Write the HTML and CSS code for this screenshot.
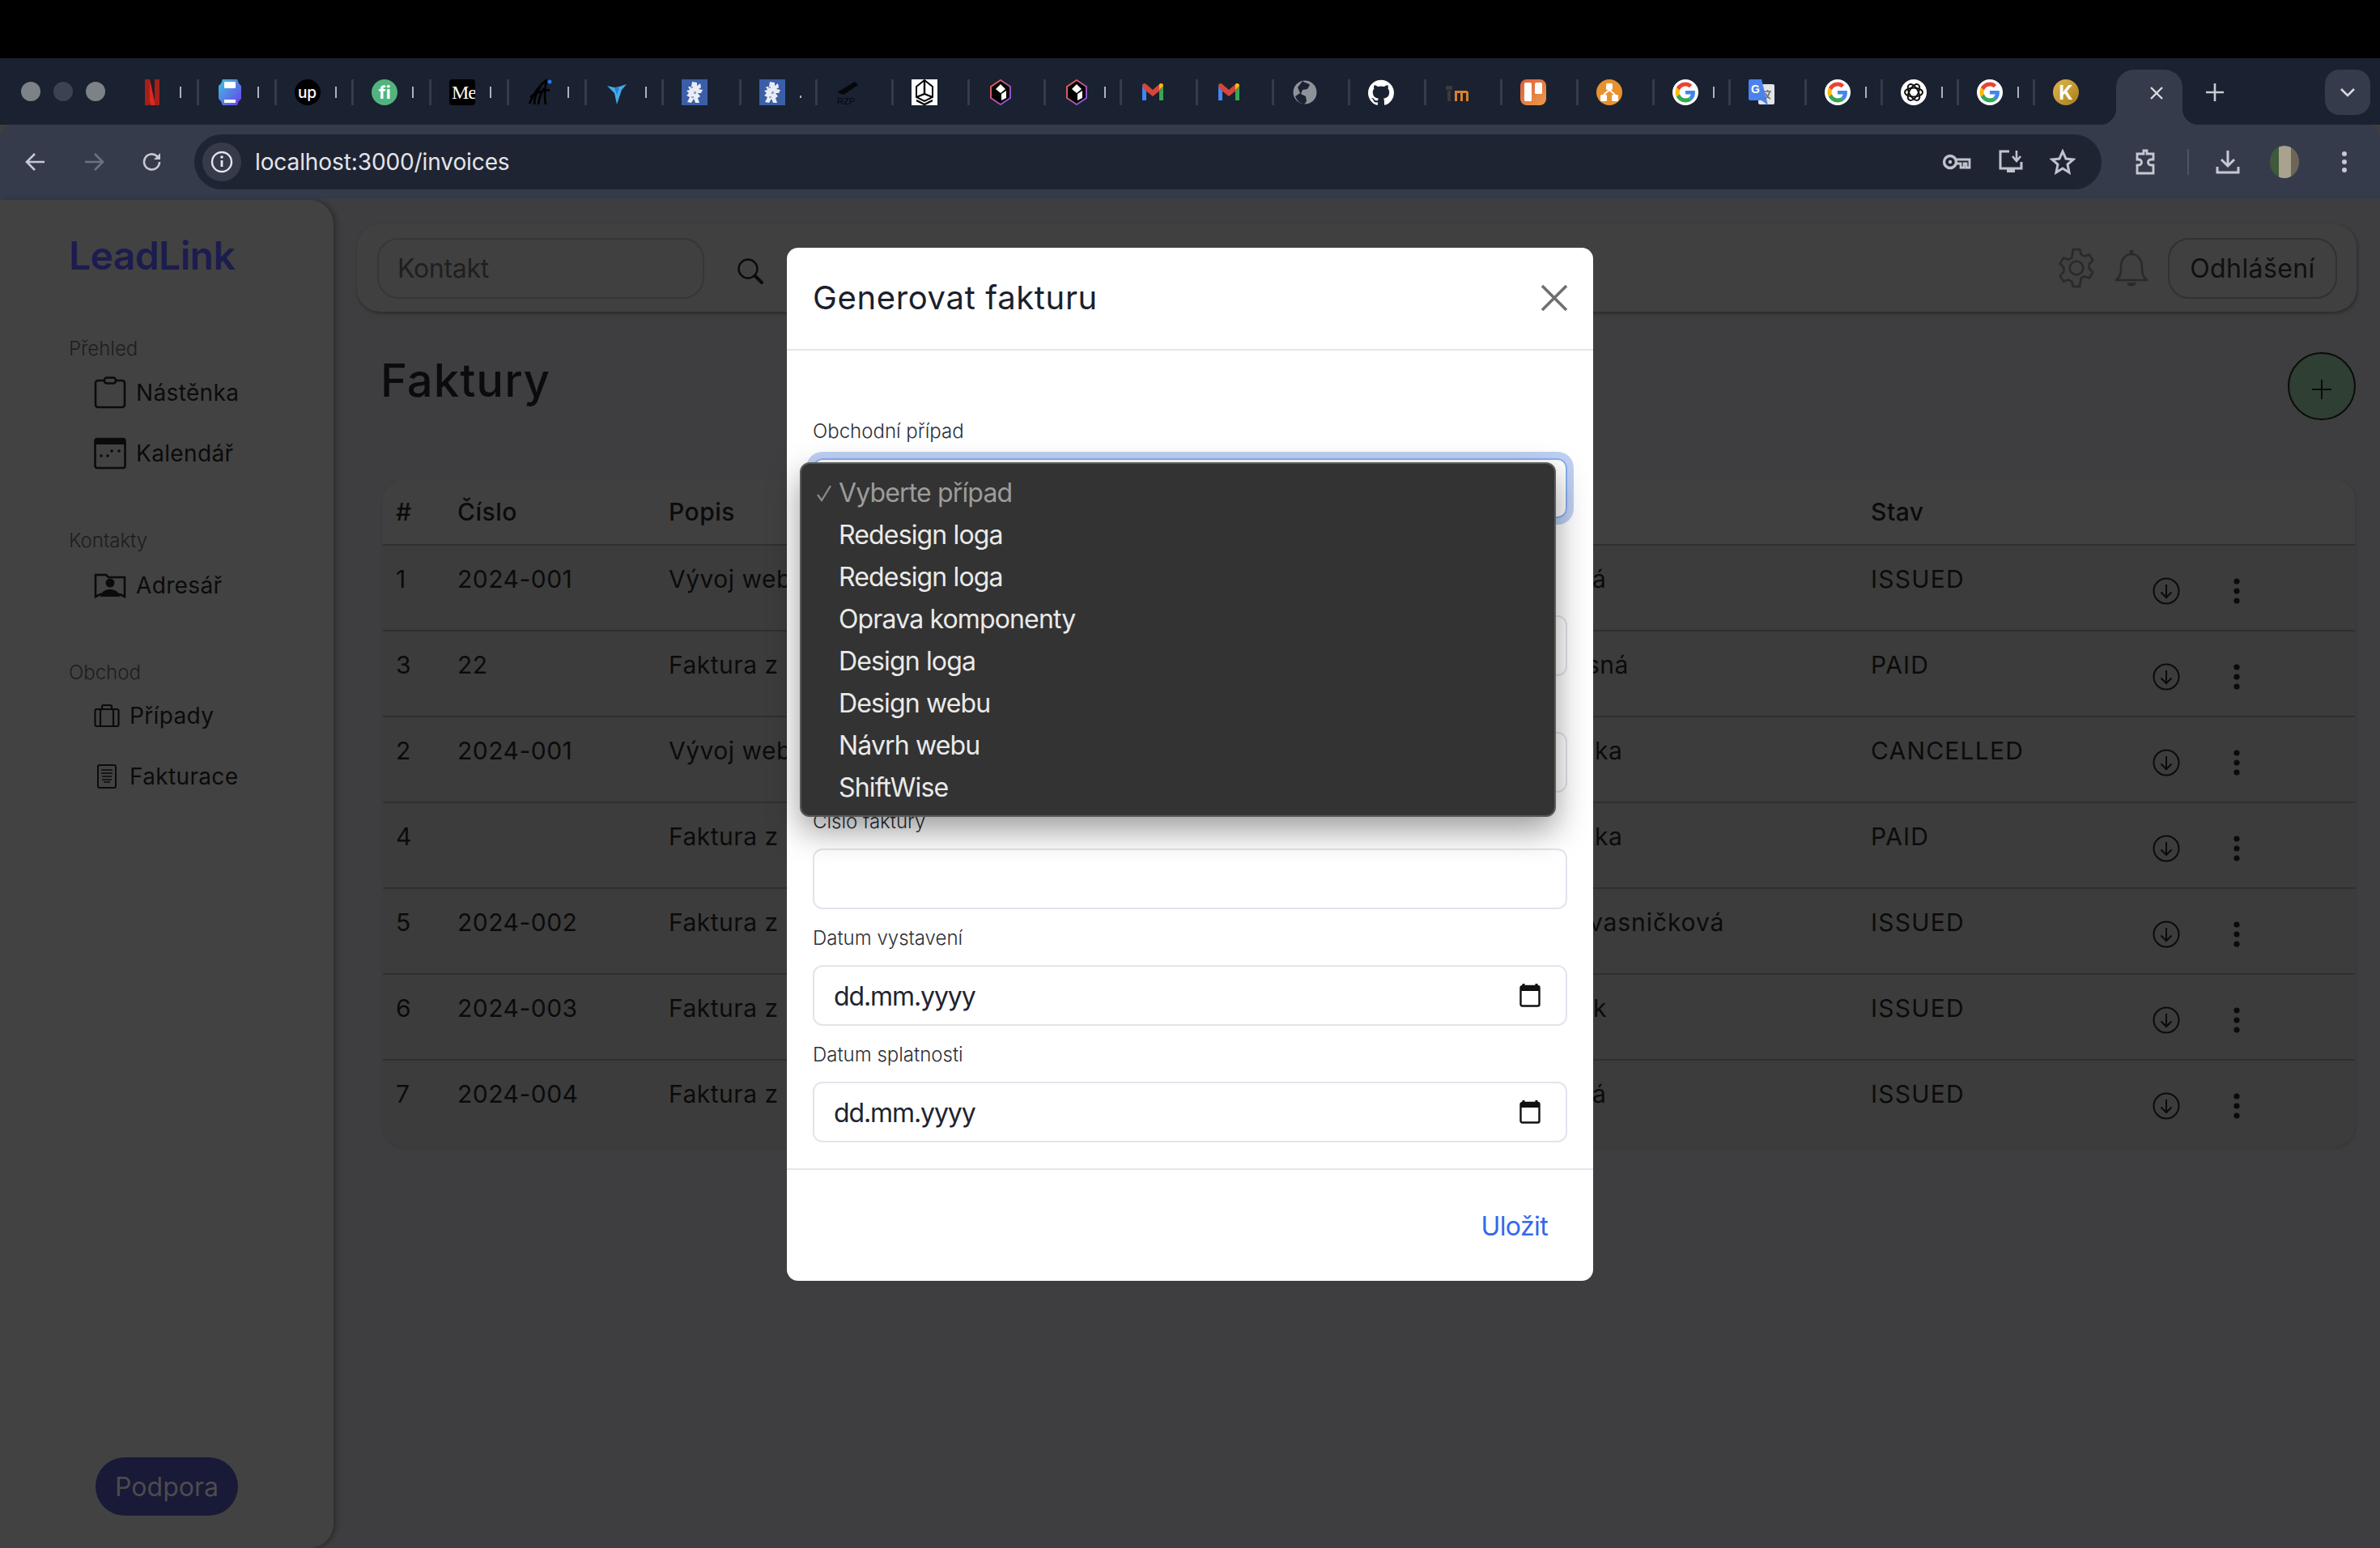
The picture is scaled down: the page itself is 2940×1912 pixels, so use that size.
FILE: index.html
```html
<!DOCTYPE html>
<html lang="cs">
<head>
<meta charset="utf-8">
<title>LeadLink – Faktury</title>
<link rel="stylesheet" href="styles.css">
</head>
<body>
<svg class="defs" width="0" height="0" aria-hidden="true">
  <defs>
    <linearGradient id="watchg" x1="0" y1="0" x2="1" y2="1"><stop offset="0" stop-color="#3fc4d8"/><stop offset="1" stop-color="#6a3df0"/></linearGradient>
    <linearGradient id="trelg" x1="0" y1="0" x2="1" y2="1"><stop offset="0" stop-color="#dd5f3c"/><stop offset="1" stop-color="#ee9a4c"/></linearGradient>
    <linearGradient id="hexg" x1="0" y1="0" x2="1" y2="1"><stop offset="0" stop-color="#f0603f"/><stop offset="1" stop-color="#7b4df0"/></linearGradient>
    <symbol id="lion" viewBox="0 0 32 32"><rect width="32" height="32" fill="#3b5ea8"/><path d="M13 3l6 1 0 4 4-3 1 5-3 2 5 1-2 4-4 0 3 4-3 2 2 6h-5l-2-5-3 5-5-1 3-6-4-2 3-3-3-3 4-1-2-4 4 0z" fill="#e8ecf5"/><path d="M11 9h3v2h-3zM15 15h3v3h-3zM12 21h3v2h-3z" fill="#8fa6d3"/></symbol>
    <symbol id="hex" viewBox="0 0 32 32"><path d="M16 1l12 8v14l-12 8-12-8V9z" fill="#000" stroke="url(#hexg)" stroke-width="2"/><path d="M16 6l6 6-6 5-6-5z" fill="#fff"/><path d="M17 18l6-4v9l-6 3z" fill="#fff"/></symbol>
    <symbol id="gmail" viewBox="0 0 32 32"><path d="M3 8v18h5V13z" fill="#4285f4"/><path d="M29 8v18h-5V13z" fill="#34a853"/><path d="M3 8c0-3 3-4 5-2l8 7 8-7c2-2 5-1 5 2l-3 5-10 8-10-8z" fill="#d44638"/><path d="M24 6c2-2 5-1 5 2l-5 5z" fill="#fbbc05"/></symbol>
    <symbol id="google" viewBox="0 0 32 32"><circle cx="16" cy="16" r="16" fill="#fff"/><g transform="translate(3.5 3.5) scale(.52)"><path fill="#EA4335" d="M24 9.5c3.54 0 6.71 1.22 9.21 3.6l6.85-6.85C35.9 2.38 30.47 0 24 0 14.62 0 6.51 5.38 2.56 13.22l7.98 6.19C12.43 13.72 17.74 9.5 24 9.5z"/><path fill="#4285F4" d="M46.98 24.55c0-1.57-.15-3.09-.38-4.55H24v9.02h12.94c-.58 2.96-2.26 5.48-4.78 7.18l7.73 6c4.51-4.18 7.09-10.36 7.09-17.65z"/><path fill="#FBBC05" d="M10.53 28.59c-.48-1.45-.76-2.99-.76-4.59s.27-3.14.76-4.59l-7.98-6.19C.92 16.46 0 20.12 0 24c0 3.88.92 7.54 2.56 10.78l7.97-6.19z"/><path fill="#34A853" d="M24 48c6.48 0 11.93-2.13 15.89-5.81l-7.73-6c-2.15 1.45-4.92 2.3-8.16 2.3-6.26 0-11.57-4.22-13.47-9.91l-7.98 6.19C6.51 42.62 14.62 48 24 48z"/></g></symbol>
    <symbol id="dl" viewBox="0 0 34 34"><circle cx="17" cy="17" r="15.5" fill="none" stroke="#0b0b0b" stroke-width="2"/><path d="M17 9v16M10.5 18.5L17 25l6.5-6.5" fill="none" stroke="#0b0b0b" stroke-width="2"/></symbol>
    <symbol id="more" viewBox="0 0 10 34"><circle cx="5" cy="5" r="3.600" fill="#0b0b0b"/><circle cx="5" cy="17" r="3.600" fill="#0b0b0b"/><circle cx="5" cy="29" r="3.600" fill="#0b0b0b"/></symbol>
    <symbol id="cal" viewBox="0 0 26 30"><path d="M5 1v4M21 1v4" stroke="#111" stroke-width="3"/><rect x="1.500" y="4" width="23" height="24.500" rx="2" fill="none" stroke="#111" stroke-width="2.400"/><rect x="1.500" y="4" width="23" height="6" fill="#111"/></symbol>
  </defs>
</svg>

<div class="titlebar"></div>

<div class="tabstrip">
  <div class="lights"><i class="light"></i><i class="light dim"></i><i class="light"></i></div>
  <div class="tab w96"><svg class="fav" viewBox="0 0 32 32"><path d="M7 0h6l7 32h-6z" fill="#e0291f"/><path d="M7 0h6v32l-6 0z" fill="#a81f18"/><path d="M19 0h6v32h-6z" fill="#a81f18"/></svg><i class="sliver"></i></div>
  <div class="tab w96"><svg class="fav" viewBox="0 0 32 32"><path d="M7 0h18l2 5 3 3v16l-3 3-2 5H7l-2-5-3-3V8l3-3z" fill="url(#watchg)"/><rect x="9" y="3" width="14" height="8" rx="1" fill="#fff"/><rect x="9" y="25" width="14" height="4" fill="#fff"/></svg><i class="sliver"></i></div>
  <div class="tab w96"><span class="fav badge upb">up</span><i class="sliver"></i></div>
  <div class="tab w96"><span class="fav badge fib">fi</span><i class="sliver"></i></div>
  <div class="tab w96"><span class="fav badge meb">Me</span><i class="sliver"></i></div>
  <div class="tab w96"><svg class="fav" viewBox="0 0 32 32"><path d="M3 30C8 18 14 8 24 1c-2 10-3 20-1 30M4 22c6-5 14-8 24-9M9 31c0-8 3-16 8-22M14 31c1-8 3-14 7-20" fill="none" stroke="#000" stroke-width="2.600"/><circle cx="28" cy="3" r="2.500" fill="#2277ee"/></svg><i class="sliver"></i></div>
  <div class="tab w96"><svg class="fav" viewBox="0 0 32 32"><path d="M3 8l9 2 6-1 9-3-6 7-3 9-3 9-3-14z" fill="#45a9ec"/><path d="M12 10l6 0-3 9z" fill="#2b7fc4"/></svg><i class="sliver"></i></div>
  <div class="tab w96"><svg class="fav"><use href="#lion"/></svg></div>
  <div class="tab"><svg class="fav"><use href="#lion"/></svg><i class="sliver tiny"></i></div>
  <div class="tab"><svg class="fav" viewBox="0 0 32 32"><path d="M2 16L24 3l4 4-18 12z" fill="#05070c"/><text x="2" y="31" class="rzp">RZP</text></svg></div>
  <div class="tab"><svg class="fav" viewBox="0 0 32 32"><rect width="32" height="32" fill="#fff"/><path d="M16 1l10 8v13l-10 5-10-5V9z" fill="#fff" stroke="#000" stroke-width="2"/><path d="M16 1v17M6 22l10-4 10 4M6 26l10 5 10-5" fill="none" stroke="#000" stroke-width="2.400"/></svg></div>
  <div class="tab"><svg class="fav"><use href="#hex"/></svg></div>
  <div class="tab"><svg class="fav"><use href="#hex"/></svg><i class="sliver"></i></div>
  <div class="tab"><svg class="fav"><use href="#gmail"/></svg></div>
  <div class="tab"><svg class="fav"><use href="#gmail"/></svg></div>
  <div class="tab"><svg class="fav" viewBox="0 0 32 32"><circle cx="16" cy="16" r="14.500" fill="#8e9299"/><path d="M13 2c3 3 7 2 9 5l-3 5-6 1-2 5 6 3 1 6-3 4c-4-1-9-4-11-10l6-4-3-7z" fill="#1b2232"/></svg></div>
  <div class="tab"><svg class="fav" viewBox="0 0 24 24"><path fill="#fff" d="M12 .5C5.37.5 0 5.87 0 12.5c0 5.3 3.44 9.8 8.2 11.38.6.11.82-.26.82-.58v-2.03c-3.34.73-4.04-1.61-4.04-1.61-.55-1.39-1.34-1.76-1.34-1.76-1.09-.74.08-.73.08-.73 1.2.09 1.84 1.24 1.84 1.24 1.07 1.83 2.81 1.3 3.5 1 .11-.78.42-1.31.76-1.61-2.67-.3-5.47-1.33-5.47-5.93 0-1.31.47-2.38 1.24-3.22-.14-.3-.54-1.52.1-3.18 0 0 1-.32 3.3 1.23a11.5 11.5 0 016 0c2.28-1.55 3.29-1.23 3.29-1.23.64 1.66.24 2.88.12 3.18.77.84 1.23 1.91 1.23 3.22 0 4.61-2.81 5.63-5.48 5.92.42.36.81 1.1.81 2.22v3.29c0 .32.22.69.83.58A12 12 0 0024 12.5C24 5.87 18.63.5 12 .5z"/></svg></div>
  <div class="tab"><svg class="fav" viewBox="0 0 32 32"><path d="M2 8h8v5H2zM4 14h4v13H4z" fill="#3d3a38"/><path d="M11 14h16c2 0 3 1 3 3v10h-3V17h-4v10h-3V17h-4v10h-3V14z" fill="#d9802c"/></svg></div>
  <div class="tab"><svg class="fav" viewBox="0 0 32 32"><rect width="32" height="32" rx="8" fill="url(#trelg)"/><rect x="5" y="4" width="9" height="23" rx="1.500" fill="#fff"/><rect x="18" y="4" width="9" height="14" rx="1.500" fill="#fff"/></svg></div>
  <div class="tab"><svg class="fav" viewBox="0 0 32 32"><circle cx="16" cy="16" r="16" fill="#e8922f"/><rect x="12" y="5" width="8" height="8" rx="1.500" fill="#fff"/><rect x="5" y="19" width="8" height="8" rx="1.500" fill="#fff"/><rect x="19" y="19" width="8" height="8" rx="1.500" fill="#fff"/><path d="M16 13l-7 6M16 13l7 6" stroke="#fff" stroke-width="2"/></svg></div>
  <div class="tab"><svg class="fav"><use href="#google"/></svg><i class="sliver"></i></div>
  <div class="tab"><svg class="fav" viewBox="0 0 32 32"><rect x="12" y="6" width="20" height="25" rx="2" fill="#e3e4e7"/><path d="M0 2a2 2 0 012-2h14l8 32-8-6H2a2 2 0 01-2-2z" fill="#4a82ee"/><text x="3" y="17" class="gt">G</text><path d="M19 15h9M23.500 13v2M26 15c-1 5-4 8-6 9M21 17c1 3 4 6 6 7" fill="none" stroke="#6d7178" stroke-width="1.700"/></svg></div>
  <div class="tab"><svg class="fav"><use href="#google"/></svg><i class="sliver"></i></div>
  <div class="tab"><svg class="fav" viewBox="0 0 32 32"><circle cx="16" cy="16" r="16" fill="#fff"/><g fill="none" stroke="#111" stroke-width="1.900"><ellipse cx="16" cy="16" rx="11" ry="5.500"/><ellipse cx="16" cy="16" rx="11" ry="5.500" transform="rotate(60 16 16)"/><ellipse cx="16" cy="16" rx="11" ry="5.500" transform="rotate(120 16 16)"/></g></svg><i class="sliver"></i></div>
  <div class="tab"><svg class="fav"><use href="#google"/></svg><i class="sliver"></i></div>
  <div class="tab plain"><span class="fav badge kb">K</span></div>
  <div class="tab-active"><svg class="x" viewBox="0 0 20 20"><path d="M3 3l14 14M17 3L3 17" stroke="#d9dbe2" stroke-width="2.400"/></svg></div>
  <svg class="newtab" viewBox="0 0 22 22"><path d="M11 0v22M0 11h22" stroke="#c8cbd4" stroke-width="2.600"/></svg>
  <div class="tabsearch"><svg viewBox="0 0 20 12" width="20" height="12"><path d="M2 2l8 8 8-8" fill="none" stroke="#d6d9e0" stroke-width="2.600"/></svg></div>
</div>

<div class="toolbar">
  <svg class="tool" viewBox="0 0 28 28"><path d="M25 14H4M13 4L3 14l10 10" fill="none" stroke="#c6c9d2" stroke-width="2.600"/></svg>
  <svg class="tool" viewBox="0 0 28 28"><path d="M3 14h21M15 4l10 10-10 10" fill="none" stroke="#6d7280" stroke-width="2.600"/></svg>
  <svg class="tool" viewBox="0 0 28 28"><path d="M23 14a9.500 9.500 0 11-3-7l3 3" fill="none" stroke="#c6c9d2" stroke-width="2.600"/><path d="M24 3v8h-8z" fill="#c6c9d2"/></svg>
  <div class="omnibox">
    <span class="chip"><svg viewBox="0 0 28 28" width="28" height="28"><circle cx="14" cy="14" r="12" fill="none" stroke="#e3e5ea" stroke-width="2.400"/><path d="M14 12v8" stroke="#e3e5ea" stroke-width="2.800"/><circle cx="14" cy="8" r="1.800" fill="#e3e5ea"/></svg></span>
    <span class="url">localhost:3000/invoices</span>
    <span class="omni-icons">
      <svg viewBox="0 0 36 24" width="36" height="24"><circle cx="10" cy="12" r="7.500" fill="none" stroke="#c0c3cc" stroke-width="3.400"/><circle cx="10" cy="12" r="2.200" fill="#c0c3cc"/><path d="M17 9h17v10h-4v-5h-3v5h-4v-5h-6" fill="none" stroke="#c0c3cc" stroke-width="2.800"/></svg>
      <svg viewBox="0 0 32 32" width="32" height="32"><path d="M14 3H3v21h26V16" fill="none" stroke="#c0c3cc" stroke-width="3"/><path d="M11 24h10v5H11z" fill="#c0c3cc"/><path d="M23 2v12M18 9l5 6 5-6" fill="none" stroke="#c0c3cc" stroke-width="2.600"/></svg>
      <svg viewBox="0 0 32 32" width="32" height="32"><path d="M16 3l4 9 9 1-7 6 2 10-8-5-8 5 2-10-7-6 9-1z" fill="none" stroke="#c0c3cc" stroke-width="3"/></svg>
    </span>
  </div>
  <svg class="tool ext" viewBox="0 0 32 32"><path d="M12 6h2V2h4v4h8v7h-3a3 3 0 000 7h3v10H6V20h2a3 3 0 000-7H6V6z" fill="none" stroke="#c6c9d2" stroke-width="2.800"/></svg>
  <i class="tool-sep"></i>
  <svg class="tool dlb" viewBox="0 0 32 32"><path d="M16 2v18M8 13l8 8 8-8" fill="none" stroke="#c6c9d2" stroke-width="3"/><path d="M3 22v7h26v-7" fill="none" stroke="#c6c9d2" stroke-width="3"/></svg>
  <i class="avatar"></i>
  <svg class="tool menu" viewBox="0 0 8 28"><circle cx="4" cy="4" r="3" fill="#c6c9d2"/><circle cx="4" cy="14" r="3" fill="#c6c9d2"/><circle cx="4" cy="24" r="3" fill="#c6c9d2"/></svg>
</div>

<div class="app">
  <aside class="sidebar">
    <div class="logo">LeadLink</div>
    <div class="nav-label">Přehled</div>
    <div class="nav-item"><svg class="ni w40" viewBox="0 0 40 40"><path d="M12 5H5a3 3 0 00-3 3v27a3 3 0 003 3h30a3 3 0 003-3V8a3 3 0 00-3-3h-7" fill="none" stroke="#0b0b0b" stroke-width="2.600"/><rect x="13" y="1.500" width="14" height="7" rx="3" fill="none" stroke="#0b0b0b" stroke-width="2.600"/></svg><span>Nástěnka</span></div>
    <div class="nav-item"><svg class="ni w40" viewBox="0 0 40 40"><rect x="1.500" y="2" width="37" height="36" rx="2.500" fill="none" stroke="#0b0b0b" stroke-width="2.600"/><rect x="1.500" y="2" width="37" height="7" fill="#0b0b0b"/><g fill="#0b0b0b"><circle cx="9" cy="23" r="1.800"/><circle cx="17" cy="23" r="1.800"/><circle cx="22" cy="17" r="1.800"/><circle cx="31" cy="17" r="1.800"/></g></svg><span>Kalendář</span></div>
    <div class="nav-label sec">Kontakty</div>
    <div class="nav-item"><svg class="ni w40 ad" viewBox="0 0 40 32"><path d="M2 30V3h13l3 3h20v24l-6-3H8z" fill="none" stroke="#0b0b0b" stroke-width="2.600"/><circle cx="20" cy="13" r="5.500" fill="#0b0b0b"/><path d="M8 30c1-7 7-9 12-9s11 2 12 9z" fill="#0b0b0b"/></svg><span>Adresář</span></div>
    <div class="nav-label sec tight">Obchod</div>
    <div class="nav-item"><svg class="ni w32" viewBox="0 0 32 28"><rect x="1.500" y="6" width="29" height="21" rx="2" fill="none" stroke="#0b0b0b" stroke-width="2.200"/><path d="M8 27V6M24 27V6M10 6V3a2 2 0 012-2h8a2 2 0 012 2v3" fill="none" stroke="#0b0b0b" stroke-width="2.200"/></svg><span>Případy</span></div>
    <div class="nav-item"><svg class="ni w24" viewBox="0 0 24 30"><rect x="1" y="1" width="22" height="28" rx="2" fill="none" stroke="#0b0b0b" stroke-width="2"/><path d="M5 7h14M5 11h14M6 15h12M6 19h12M8 22h8" stroke="#0b0b0b" stroke-width="1.500"/></svg><span>Fakturace</span></div>
    <div class="support">Podpora</div>
  </aside>

  <main class="main">
    <header class="topbar">
      <div class="search">Kontakt</div>
      <svg class="search-ic" viewBox="0 0 34 34"><circle cx="14" cy="14" r="11.500" fill="none" stroke="#0b0b0b" stroke-width="2.400"/><path d="M22.500 22.500L31 31" stroke="#0b0b0b" stroke-width="4" stroke-linecap="round"/></svg>
      <div class="top-right">
        <svg class="gear" viewBox="0 0 50 50"><circle cx="25" cy="25" r="8" fill="none" stroke="#2a2a2a" stroke-width="2.600"/><path d="M21 3h8l1.500 6 4 2 6-2 4 7-4.500 4.500v5l4.500 4.500-4 7-6-2-4 2L29 47h-8l-1.500-6-4-2-6 2-4-7L10 29.500v-5L5.500 20l4-7 6 2 4-2z" fill="none" stroke="#2a2a2a" stroke-width="2.600" stroke-linejoin="round"/></svg>
        <svg class="bell" viewBox="0 0 42 50"><path d="M2 40c5-4 6-8 6-16 0-9 5-16 13-16s13 7 13 16c0 8 1 12 6 16z" fill="none" stroke="#2a2a2a" stroke-width="2.600" stroke-linejoin="round"/><circle cx="21" cy="5" r="2.500" fill="#2a2a2a"/><path d="M15 43h12c-1 6-11 6-12 0z" fill="#2a2a2a"/></svg>
        <div class="logout">Odhlášení</div>
      </div>
    </header>

    <div class="page-head">
      <h1 class="title">Faktury</h1>
      <div class="fab"><svg viewBox="0 0 24 24" width="24" height="24"><path d="M12 0v24M0 12h24" stroke="#0b0b0b" stroke-width="2"/></svg></div>
    </div>

    <table class="tbl">
      <colgroup><col class="c1"><col class="c2"><col class="c3"><col class="c4"><col class="c5"><col></colgroup>
      <thead><tr><th>#</th><th>Číslo</th><th>Popis</th><th></th><th>Stav</th><th></th></tr></thead>
      <tbody>
        <tr><td>1</td><td>2024-001</td><td>Vývoj webu</td><td class="cl p-a">á</td><td class="st">ISSUED</td><td class="act"><svg class="dl"><use href="#dl"/></svg><svg class="more"><use href="#more"/></svg></td></tr>
        <tr><td>3</td><td>22</td><td>Faktura z</td><td class="cl p-sna">sná</td><td class="st">PAID</td><td class="act"><svg class="dl"><use href="#dl"/></svg><svg class="more"><use href="#more"/></svg></td></tr>
        <tr><td>2</td><td>2024-001</td><td>Vývoj webu</td><td class="cl p-ka">ka</td><td class="st">CANCELLED</td><td class="act"><svg class="dl"><use href="#dl"/></svg><svg class="more"><use href="#more"/></svg></td></tr>
        <tr><td>4</td><td></td><td>Faktura z</td><td class="cl p-ka">ka</td><td class="st">PAID</td><td class="act"><svg class="dl"><use href="#dl"/></svg><svg class="more"><use href="#more"/></svg></td></tr>
        <tr><td>5</td><td>2024-002</td><td>Faktura z</td><td class="cl p-kv">vasničková</td><td class="st">ISSUED</td><td class="act"><svg class="dl"><use href="#dl"/></svg><svg class="more"><use href="#more"/></svg></td></tr>
        <tr><td>6</td><td>2024-003</td><td>Faktura z</td><td class="cl p-k">k</td><td class="st">ISSUED</td><td class="act"><svg class="dl"><use href="#dl"/></svg><svg class="more"><use href="#more"/></svg></td></tr>
        <tr><td>7</td><td>2024-004</td><td>Faktura z</td><td class="cl p-a">á</td><td class="st">ISSUED</td><td class="act"><svg class="dl"><use href="#dl"/></svg><svg class="more"><use href="#more"/></svg></td></tr>
      </tbody>
    </table>
  </main>
</div>

<section class="modal">
  <div class="modal-head">
    <h2 class="modal-title">Generovat fakturu</h2>
    <svg class="modal-x" viewBox="0 0 34 34"><path d="M2 2l30 30M32 2L2 32" stroke="#6f6f6f" stroke-width="3.600"/></svg>
  </div>
  <div class="modal-body">
    <div class="field"><div class="lbl">Obchodní případ</div><div class="ctl focus"></div></div>
    <div class="field after-select"><div class="lbl"></div><div class="ctl"></div></div>
    <div class="field"><div class="lbl"></div><div class="ctl"></div></div>
    <div class="field"><div class="lbl">Číslo faktury</div><div class="ctl"></div></div>
    <div class="field"><div class="lbl">Datum vystavení</div><div class="ctl date"><span class="dateval">dd.mm.yyyy</span><svg class="cal"><use href="#cal"/></svg></div></div>
    <div class="field"><div class="lbl">Datum splatnosti</div><div class="ctl date"><span class="dateval">dd.mm.yyyy</span><svg class="cal"><use href="#cal"/></svg></div></div>
  </div>
  <div class="modal-foot"><span class="save">Uložit</span></div>

  <div class="dropdown">
    <div class="opt sel"><svg class="check" viewBox="0 0 20 24"><path d="M2 14l5 7L18 3" fill="none" stroke="#8b8b8b" stroke-width="2.200"/></svg>Vyberte případ</div>
    <div class="opt">Redesign loga</div>
    <div class="opt">Redesign loga</div>
    <div class="opt">Oprava komponenty</div>
    <div class="opt">Design loga</div>
    <div class="opt">Design webu</div>
    <div class="opt">Návrh webu</div>
    <div class="opt">ShiftWise</div>
  </div>
</section>
</body>
</html>
```

FILE: styles.css
```css
* { box-sizing: border-box; }
html, body { margin: 0; padding: 0; }
body {
  width: 2940px; height: 1912px; overflow: hidden; position: relative;
  background: #3e3e40; font-family: Inter, "Noto Sans", sans-serif; color: #0b0b0b;
  display: flex; flex-direction: column;
}
.defs { position: absolute; }
.titlebar { height: 72px; background: #000; flex: none; }

/* tab strip */
.tabstrip { height: 82px; background: #1a2131; flex: none; display: flex; align-items: flex-start; }
.lights { width: 150px; flex: none; display: flex; gap: 16px; padding: 29px 0 0 26px; }
.light { width: 24px; height: 24px; border-radius: 50%; background: #7d8188; }
.light.dim { background: #3c4250; }
.tab {
  width: 94px; height: 32px; margin-top: 26px; flex: none; padding-left: 22px;
  display: flex; align-items: center; border-right: 3px solid #353b4b;
}
.tab.w96 { width: 95.75px; }
.tab.plain { width: 100px; border-right: 0; }
.fav { width: 32px; height: 32px; flex: none; display: block; }
.sliver { width: 2px; height: 14px; margin-left: 18px; background: #aeb1ba; flex: none; }
.sliver.tiny { height: 3px; margin-top: 10px; }
.badge { display: flex; align-items: center; justify-content: center; border-radius: 50%; font-weight: 700; }
.upb { background: #000; color: #fff; font-size: 19px; font-weight: 500; }
.fib { background: #52b47c; color: #fff; font-size: 22px; }
.meb { background: #000; color: #fff; border-radius: 4px; font: 400 24px "Liberation Serif", serif; overflow: hidden; justify-content: flex-start; padding-left: 3px; letter-spacing: -1px; }
.kb { background: linear-gradient(135deg, #e2b84a, #a67c1f); color: #fff; font-size: 24px; }
.rzp { font: 400 11px "Liberation Sans", sans-serif; fill: #05070c; }
.gt { font: 700 14px "Liberation Sans", sans-serif; fill: #fff; }
.tab-active {
  width: 82px; height: 68px; margin-top: 14px; background: #353b4b; flex: none; position: relative;
  border-radius: 22px 22px 0 0; display: flex; align-items: flex-start; justify-content: center; padding-top: 18px;
}
.tab-active::before, .tab-active::after {
  content: ""; position: absolute; bottom: 0; width: 20px; height: 20px;
}
.tab-active::before { left: -20px; background: radial-gradient(circle at 0 0, transparent 20px, #353b4b 20.5px); }
.tab-active::after { right: -20px; background: radial-gradient(circle at 100% 0, transparent 20px, #353b4b 20.5px); }
.x { width: 20px; height: 20px; margin-left: 18px; margin-top: 1px; }
.newtab { width: 22px; height: 22px; margin: 31px 0 0 29px; flex: none; }
.tabsearch {
  width: 56px; height: 56px; margin: 14px 0 0 125px; background: #353b4b; border-radius: 18px; flex: none;
  display: flex; align-items: center; justify-content: center;
}

/* toolbar */
.toolbar {
  height: 93px; flex: none; background: #353b4b; display: flex; align-items: center; border-radius: 16px 16px 0 0;
  padding: 0 0 1px 30px; border-bottom: 1px solid #3f4046;
}
.tool { width: 28px; height: 28px; flex: none; margin-right: 44px; }
.toolbar .tool:nth-child(3) { margin-right: 38px; }
.omnibox {
  width: 2356px; height: 68px; flex: none; background: #1f2433; border-radius: 34px; display: flex; align-items: center;
  padding: 0 32px 0 10px;
}
.chip { width: 48px; height: 48px; border-radius: 50%; background: #353b4b; display: flex; align-items: center; justify-content: center; flex: none; }
.url { margin-left: 17px; font: 400 28px Inter, sans-serif; letter-spacing: -.1px; color: #e3e5ea; }
.omni-icons { margin-left: auto; display: flex; align-items: center; gap: 32px; }
.omni-icons svg:first-child { margin-right: 1px; }
.tool.ext { width: 32px; height: 32px; margin: 0 36px 0 38px; }
.tool-sep { width: 2px; height: 32px; background: #4d5363; flex: none; }
.tool.dlb { width: 32px; height: 32px; margin: 0 0 0 32px; }
.avatar { width: 36px; height: 40px; margin-left: 36px; border-radius: 50%; flex: none; background: linear-gradient(90deg, #3d5a3a 0 30%, #a8a28e 30% 72%, #6b6658 72%); }
.tool.menu { width: 8px; height: 28px; margin: 0 0 0 52px; }

/* app */
.app { flex: 1; display: flex; min-height: 0; }
.sidebar {
  width: 412px; flex: none; background: #424242; border-radius: 0 30px 30px 0; box-shadow: 3px 0 6px rgba(0,0,0,.3);
  padding: 39px 0 40px 85px; display: flex; flex-direction: column;
}
.logo { font-size: 48px; line-height: 60px; font-weight: 600; color: #1c1c4e; letter-spacing: -.6px; }
.nav-label { font-size: 24px; line-height: 36px; font-weight: 300; color: #1d1d1d; margin-top: 67px; margin-bottom: -1px; }
.nav-label.sec { margin-top: 52px; margin-bottom: 0; }
.nav-label.sec.tight { margin-bottom: -2px; }
.nav-item { height: 75px; padding: 0 0 2px 31px; display: flex; align-items: center; gap: 12px; font-size: 28px; letter-spacing: .35px; color: #0b0b0b; }
.ni { flex: none; display: block; }
.w40 { width: 40px; height: 40px; }
.w40.ad { height: 32px; }
.w32 { width: 32px; height: 28px; }
.w24 { width: 24px; height: 30px; margin: 0 4px; }
.support {
  margin-top: auto; margin-left: 33px; width: 176px; height: 72px; border-radius: 36px; background: #191938; color: #4c4c4c;
  font-size: 32px; display: flex; align-items: center; justify-content: center;
}

.main { flex: 1; min-width: 0; padding: 30px 29px 0; }
.topbar {
  height: 108px; border-radius: 28px; background: #404040; box-shadow: 1px 2px 4px rgba(0,0,0,.35);
  display: flex; align-items: center; padding: 0 24px 0 25px;
}
.search {
  width: 404px; height: 75px; border: 2px solid #363636; border-radius: 26px; padding-left: 23px; display: flex; align-items: center;
  font-size: 32px; letter-spacing: -.3px; color: #1f1f1f;
}
.search-ic { width: 34px; height: 34px; margin: 8px 0 0 40px; flex: none; }
.top-right { margin-left: auto; display: flex; align-items: center; }
.gear { width: 52px; height: 52px; }
.bell { width: 42px; height: 50px; margin-left: 21px; }
.logout {
  width: 209px; height: 75px; margin-left: 24px; border: 2px solid #313131; border-radius: 26px;
  display: flex; align-items: center; justify-content: center; font-size: 32px; letter-spacing: .4px; color: #0f0f0f;
}
.page-head { margin: 50px 1px 0 29px; height: 84px; display: flex; justify-content: space-between; align-items: center; }
.title { margin: 0 0 14px; font-size: 56px; line-height: 70px; font-weight: 500; letter-spacing: 1.1px; color: #0b0b0d; }
.fab {
  width: 84px; height: 84px; border-radius: 50%; background: #2f3f33; border: 2px solid #0b0b0b;
  display: flex; align-items: center; justify-content: center; padding-top: 8px;
}
.tbl {
  margin: 73px 0 0 32px; width: 2436px; table-layout: fixed; border-collapse: separate; border-spacing: 0;
  border-radius: 26px; background: #3c3c3c; box-shadow: 1px 2px 4px rgba(0,0,0,.12); font-size: 30px; letter-spacing: .5px;
}
.c1 { width: 76px; } .c2 { width: 261px; } .c3 { width: 1148px; } .c4 { width: 337px; } .c5 { width: 345px; }
.tbl th { height: 82px; padding: 0 0 0 16px; text-align: left; font-weight: 500; border-bottom: 2px solid #2f2f2f; background: #404040; }
.tbl th:first-child { border-top-left-radius: 26px; }
.tbl th:last-child { border-top-right-radius: 26px; }
.tbl td { height: 106px; padding: 21px 0 0 16px; vertical-align: top; line-height: 40px; border-bottom: 2px solid #2f2f2f; white-space: nowrap; overflow: hidden; }
.tbl tr:last-child td { border-bottom: 0; }
.tbl td.st { letter-spacing: 1.2px; }
.tbl td.cl { padding-left: 9px; }
.tbl td.p-sna { padding-left: 2px; }
.tbl td.p-ka { padding-left: 12px; }
.tbl td.p-kv { padding-left: 5px; letter-spacing: .9px; }
.tbl td.p-k { padding-left: 10px; }
.tbl td.act { padding: 39px 0 0 19px; }
.dl { width: 34px; height: 34px; display: inline-block; vertical-align: top; }
.more { width: 10px; height: 34px; margin-left: 65px; display: inline-block; vertical-align: top; }

/* modal over the page */
.modal {
  position: absolute; left: 972px; top: 306px; width: 996px; height: 1276px; background: #fff; border-radius: 14px;
  color: #1f2430; display: flex; flex-direction: column;
}
.modal-head { height: 127px; flex: none; border-bottom: 2px solid #e2e5ec; display: flex; align-items: center; justify-content: space-between; padding: 0 31px 2px 32px; }
.modal-title { margin: 0; font-size: 40px; font-weight: 400; letter-spacing: .65px; color: #1a202c; }
.modal-x { width: 34px; height: 34px; }
.modal-body { padding: 82px 32px 32px; display: flex; flex-direction: column; gap: 18px; flex: none; }
.field.after-select { margin-top: 51px; }
.lbl { height: 36px; line-height: 36px; margin-bottom: 15px; font-size: 24px; font-weight: 300; color: #2a2f3a; }
.ctl { height: 75px; border: 2px solid #e2e5ec; border-radius: 12px; display: flex; align-items: center; justify-content: space-between; padding: 0 24px; font-size: 32px; }
.ctl.focus { border-color: #8ab0ee; box-shadow: 0 0 0 8px #bfd1f6; height: 74px; }
.dateval { letter-spacing: -1.1px; padding-top: 2px; }
.cal { width: 26px; height: 30px; margin-top: -2px; margin-right: 7px; }
.modal-foot { flex: 1; border-top: 2px solid #e2e5ec; display: flex; align-items: center; justify-content: flex-end; padding: 1px 56px 0 0; }
.save { font-size: 32px; letter-spacing: -.6px; color: #3268ee; }
.dropdown {
  position: absolute; left: 16px; top: 265px; width: 934px; height: 438px; background: #333; border: 2px solid #5a5a5a; border-radius: 12px;
  padding: 9px 0; box-shadow: 0 16px 40px rgba(0,0,0,.4);
}
.opt { height: 52px; padding-left: 46px; display: flex; align-items: center; font-size: 32px; letter-spacing: -.85px; color: #eaeaea; position: relative; }
.opt.sel { color: #9c9c9c; }
.check { position: absolute; left: 18px; top: 15px; width: 20px; height: 24px; }
```
